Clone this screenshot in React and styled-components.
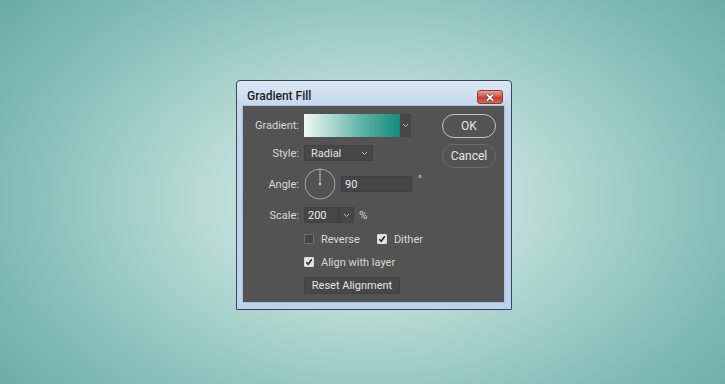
import React from "react";
import styled, { createGlobalStyle } from "styled-components";

const Global = createGlobalStyle`
  html, body {
    margin: 0;
    padding: 0;
    height: 100%;
  }
  body {
    font-family: Roboto, "Liberation Sans", sans-serif;
  }
`;

const Page = styled.div`
  width: 725px;
  height: 384px;
  box-sizing: border-box;
  padding: 80px 0 0 236px;
  background: radial-gradient(ellipse 72% 90% at 51% 52%, #d4eae8 0%, #bbdcd8 30%, #88c0b9 65%, #5ea59b 100%);
  overflow: hidden;
`;

const Dialog = styled.div`
  width: 276px;
  height: 230px;
  box-sizing: border-box;
  border: 1px solid #3a4652;
  border-radius: 4px 4px 1px 1px;
  background: linear-gradient(#dbe7f5, #c3d6ee 12%, #bdd2ec);
  display: flex;
  flex-direction: column;
  padding: 0 6px 6px 5px;
`;

const TitleBar = styled.div`
  height: 24px;
  display: flex;
  align-items: center;
  justify-content: space-between;
  padding: 0 2px 0 5px;
`;

const Title = styled.span`
  font-size: 12px;
  font-weight: 500;
  color: #1c1c1c;
  margin-top: 6px;
`;

const CloseButton = styled.div`
  width: 26px;
  height: 14px;
  margin-top: 8px;
  border: 1px solid #8e3a30;
  border-radius: 3px;
  background: linear-gradient(#e5a497, #d0584a 45%, #c2402f 55%, #d46a56);
  display: flex;
  align-items: center;
  justify-content: center;
  box-sizing: border-box;
`;

const Panel = styled.div`
  flex: 1;
  background: #535353;
  border: 1px solid #aebed6;
  display: flex;
  justify-content: space-between;
  padding: 8px 8px 0 0;
  color: #d8d8d8;
  font-size: 11px;
`;

const Form = styled.div`
  display: flex;
  flex-direction: column;
`;

const Row = styled.div`
  display: flex;
  align-items: center;
  height: ${(p) => p.$h}px;
  margin-top: ${(p) => p.$mt}px;
`;

const Label = styled.span`
  width: 56px;
  margin-right: 5px;
  text-align: right;
  flex-shrink: 0;
`;

const Indent = styled.div`
  width: 61px;
  flex-shrink: 0;
`;

const GradientSwatch = styled.div`
  width: 96px;
  height: 23px;
  background: linear-gradient(90deg, #eef8f6 0%, #b6dcd6 25%, #5fb2a6 60%, #148a7c 100%);
`;

const ArrowBox = styled.div`
  width: ${(p) => p.$w}px;
  height: 100%;
  background: #474747;
  display: flex;
  align-items: center;
  justify-content: center;
  border-left: ${(p) => (p.$split ? "1px solid #3c3c3c" : "none")};
  box-sizing: border-box;
`;

const Select = styled.div`
  width: 69px;
  height: 16px;
  background: #474747;
  border: 1px solid #414141;
  box-sizing: border-box;
  display: flex;
  align-items: center;
  justify-content: space-between;
  padding: 0 4px 0 6px;
  color: #e2e2e2;
`;

const Dial = styled.svg`
  width: 32px;
  height: 32px;
  flex-shrink: 0;
`;

const Input = styled.div`
  width: ${(p) => p.$w}px;
  height: ${(p) => p.$h}px;
  background: #454545;
  border: 1px solid #3f3f3f;
  box-sizing: border-box;
  display: flex;
  align-items: center;
  padding-left: 3px;
  color: #ececec;
  margin-left: ${(p) => p.$ml || 0}px;
`;

const Combo = styled.div`
  display: flex;
  height: 16px;
  border: 1px solid #414141;
  box-sizing: border-box;
`;

const ComboText = styled.div`
  width: 34px;
  background: #454545;
  display: flex;
  align-items: center;
  padding-left: 3px;
  box-sizing: border-box;
  color: #ececec;
`;

const Unit = styled.span`
  margin-left: ${(p) => p.$ml}px;
  align-self: ${(p) => (p.$top ? "flex-start" : "center")};
  margin-top: ${(p) => (p.$top ? 6 : 0)}px;
  font-size: ${(p) => (p.$top ? 10 : 11.5)}px;
`;

const Check = styled.div`
  width: 10px;
  height: 10px;
  box-sizing: border-box;
  border: 1px solid ${(p) => (p.$on ? "#dcdcdc" : "#6e6e6e")};
  background: ${(p) => (p.$on ? "#e2e2e2" : "#454545")};
  border-radius: 1px;
  display: flex;
  align-items: center;
  justify-content: center;
  margin-left: ${(p) => p.$ml || 0}px;
  margin-right: 7px;
  flex-shrink: 0;
`;

const Button = styled.div`
  width: 96px;
  height: 17px;
  background: #474747;
  border: 1px solid #414141;
  box-sizing: border-box;
  display: flex;
  align-items: center;
  justify-content: center;
  color: #e4e4e4;
`;

const Side = styled.div`
  display: flex;
  flex-direction: column;
  gap: 6px;
  padding-top: 0;
`;

const Pill = styled.div`
  width: 54px;
  height: 24px;
  box-sizing: border-box;
  border-radius: 12px;
  border: ${(p) => (p.$primary ? "1.5px solid #c4c4c4" : "1px solid #6c6c6c")};
  display: flex;
  align-items: center;
  justify-content: center;
  color: #e6e6e6;
  font-size: 12px;
`;

const Chevron = () => (
  <svg width="7" height="5" viewBox="0 0 7 5">
    <path d="M1 1l2.5 2.5L6 1" fill="none" stroke="#b8b8b8" strokeWidth="1" />
  </svg>
);

const Tick = () => (
  <svg width="8" height="8" viewBox="0 0 8 8">
    <path d="M1.3 4.2L3.2 6.2L6.8 1.3" fill="none" stroke="#2a2a2a" strokeWidth="1.6" />
  </svg>
);

export default function App() {
  return (
    <Page>
      <Global />
      <Dialog>
        <TitleBar>
          <Title>Gradient Fill</Title>
          <CloseButton>
            <svg width="10" height="9" viewBox="0 0 10 9">
              <path d="M2 1.5l6 6M8 1.5l-6 6" stroke="#5a1d16" strokeWidth="3" />
              <path d="M2 1.5l6 6M8 1.5l-6 6" stroke="#fff" strokeWidth="1.8" />
            </svg>
          </CloseButton>
        </TitleBar>
        <Panel>
          <Form>
            <Row $h={23} $mt={0}>
              <Label>Gradient:</Label>
              <GradientSwatch />
              <ArrowBox $w={11}>
                <Chevron />
              </ArrowBox>
            </Row>
            <Row $h={16} $mt={8}>
              <Label>Style:</Label>
              <Select>
                Radial
                <Chevron />
              </Select>
            </Row>
            <Row $h={32} $mt={7}>
              <Label>Angle:</Label>
              <Dial viewBox="0 0 32 32">
                <circle cx="16" cy="16" r="15" fill="none" stroke="#a6a6a6" strokeWidth="1" />
                <line x1="16" y1="1" x2="16" y2="16" stroke="#bcbcbc" strokeWidth="1" />
                <circle cx="16" cy="16" r="1.3" fill="#c8c8c8" />
              </Dial>
              <Input $w={71} $h={16} $ml={5}>90</Input>
              <Unit $ml={6} $top>°</Unit>
            </Row>
            <Row $h={16} $mt={7}>
              <Label>Scale:</Label>
              <Combo>
                <ComboText>200</ComboText>
                <ArrowBox $w={14} $split>
                  <Chevron />
                </ArrowBox>
              </Combo>
              <Unit $ml={5}>%</Unit>
            </Row>
            <Row $h={14} $mt={9}>
              <Indent />
              <Check />
              Reverse
              <Check $on $ml={17}>
                <Tick />
              </Check>
              Dither
            </Row>
            <Row $h={14} $mt={9}>
              <Indent />
              <Check $on>
                <Tick />
              </Check>
              Align with layer
            </Row>
            <Row $h={17} $mt={8}>
              <Indent />
              <Button>Reset Alignment</Button>
            </Row>
          </Form>
          <Side>
            <Pill $primary>OK</Pill>
            <Pill>Cancel</Pill>
          </Side>
        </Panel>
      </Dialog>
    </Page>
  );
}
